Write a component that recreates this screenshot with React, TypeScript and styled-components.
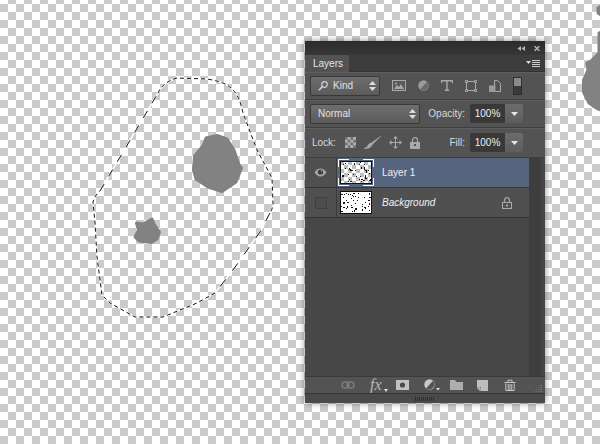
import React from "react";
import styled, { createGlobalStyle } from "styled-components";

const GlobalStyle = createGlobalStyle`
  html, body {
    margin: 0;
    padding: 0;
    background: #fff;
  }
`;

const Canvas = styled.div`
  position: relative;
  width: 600px;
  height: 444px;
  overflow: hidden;
  background-color: #fff;
  background-image: conic-gradient(#fff 25%, #cbcbcb 0 50%, #fff 0 75%, #cbcbcb 0);
  background-size: 16px 16px;
  background-position: 0 4px;
  font-family: "Liberation Sans", Arial, sans-serif;
  font-size: 10px;
  color: #dcdcdc;
`;

const Artwork = styled.svg`
  position: absolute;
  left: 0;
  top: 0;
`;

const Panel = styled.div`
  position: absolute;
  left: 305px;
  top: 41px;
  width: 240px;
  height: 362px;
  display: flex;
  flex-direction: column;
  background: #535353;
  box-shadow: 0 0 6px rgba(0, 0, 0, 0.45);
`;

const TitleBar = styled.div`
  height: 14px;
  flex: none;
  display: flex;
  align-items: center;
  justify-content: flex-end;
  gap: 9px;
  padding-right: 5px;
  background: linear-gradient(#2b2b2b, #383838);
`;

const TabRow = styled.div`
  height: 17px;
  flex: none;
  box-sizing: border-box;
  display: flex;
  align-items: center;
  justify-content: space-between;
  padding-right: 5px;
  background: #3d3d3d;
  border-bottom: 1px solid #333;
`;

const Tab = styled.div`
  width: 44px;
  height: 17px;
  align-self: flex-start;
  box-sizing: border-box;
  padding: 1px 0 0 8px;
  background: #535353;
  color: #e6e6e6;
  line-height: 15px;
`;

const OptionRow = styled.div<{ $height: number }>`
  height: ${(p) => p.$height}px;
  flex: none;
  box-sizing: border-box;
  display: flex;
  align-items: center;
  padding: 0 22px 0 5px;
  border-bottom: 1px solid #3e3e3e;
  box-shadow: inset 0 1px 0 #5f5f5f;
`;

const Select = styled.div<{ $width: number }>`
  width: ${(p) => p.$width}px;
  height: 20px;
  flex: none;
  box-sizing: border-box;
  display: flex;
  align-items: center;
  gap: 5px;
  padding: 0 3px 0 7px;
  border: 1px solid #393939;
  border-radius: 2px;
  background: linear-gradient(#6e6e6e, #5b5b5b);
  color: #e2e2e2;
`;

const SelectLabel = styled.span`
  flex: 1;
`;

const FilterIcons = styled.div`
  display: flex;
  align-items: center;
  gap: 12px;
  margin-left: 12px;
`;

const RowLabel = styled.span<{ $left?: number }>`
  margin-left: ${(p) => (p.$left === undefined ? "auto" : `${p.$left}px`)};
  color: #dadada;
`;

const NumberField = styled.div`
  width: 53px;
  height: 19px;
  margin-left: 5px;
  flex: none;
  display: flex;
  border-radius: 2px;
  overflow: hidden;
`;

const NumberValue = styled.div`
  width: 35px;
  text-align: center;
  line-height: 19px;
  background: #393939;
  color: #eee;
`;

const NumberArrow = styled.div`
  flex: 1;
  display: flex;
  align-items: center;
  justify-content: center;
  background: linear-gradient(#6c6c6c, #5d5d5d);
`;

const LockIcons = styled.div`
  display: flex;
  align-items: center;
  gap: 8px;
  margin-left: 9px;
`;

const ListArea = styled.div`
  flex: 1;
  display: flex;
  min-height: 0;
  background: #474747;
`;

const Layers = styled.div`
  flex: 1;
  display: flex;
  flex-direction: column;
`;

const Scrollbar = styled.div`
  width: 12px;
  flex: none;
  background: #3e3e3e;
  margin-right: 4px;
`;

const LayerRow = styled.div`
  height: 30px;
  box-sizing: border-box;
  display: grid;
  grid-template-columns: 32px 1fr;
  border-bottom: 1px solid #363636;
  background: #505050;
`;

const EyeCell = styled.div`
  display: flex;
  align-items: center;
  justify-content: center;
  border-right: 1px solid #3a3a3a;
`;

const EmptyBox = styled.div`
  width: 10px;
  height: 10px;
  border: 1px solid #3f3f3f;
  background: #4d4d4d;
`;

const LayerBody = styled.div<{ $selected?: boolean }>`
  display: flex;
  align-items: center;
  gap: 10px;
  padding: 0 17px 0 3px;
  background: ${(p) => (p.$selected ? "#56647d" : "transparent")};
`;

const Thumb = styled.div`
  width: 32px;
  height: 23px;
  flex: none;
  line-height: 0;
`;

const LayerName = styled.span<{ $italic?: boolean }>`
  flex: 1;
  color: #f0f0f0;
  font-style: ${(p) => (p.$italic ? "italic" : "normal")};
`;

const Footer = styled.div`
  height: 17px;
  flex: none;
  box-sizing: border-box;
  display: flex;
  align-items: center;
  padding: 0 3px 0 36px;
  background: #535353;
  border-top: 1px solid #3b3b3b;
`;

const FooterSlot = styled.div<{ $width: number }>`
  width: ${(p) => p.$width}px;
  flex: none;
  display: flex;
  align-items: flex-end;
  gap: 2px;
`;

const FxLabel = styled.span`
  font-family: "Liberation Serif", serif;
  font-style: italic;
  font-size: 16px;
  color: #b9b9b9;
  line-height: 14px;
`;

const ResizeDots = styled.div`
  margin-left: auto;
  align-self: flex-end;
  margin-bottom: 1px;
  line-height: 0;
`;

const ResizeStrip = styled.div`
  height: 10px;
  flex: none;
  box-sizing: border-box;
  display: flex;
  align-items: center;
  justify-content: center;
  border-top: 1px solid #343434;
  background: #4a4a4a;
`;

// Small repeatable PRNG so the thumbnails keep the same speckle on every load
function speckle(seed: number, count: number, width: number, height: number) {
  const dots: { x: number; y: number }[] = [];
  let s = seed;
  const next = () => {
    s = (s * 16807) % 2147483647;
    return s / 2147483647;
  };
  for (let i = 0; i < count; i++) {
    dots.push({ x: Math.floor(next() * width), y: Math.floor(next() * height) });
  }
  return dots;
}

const dim = "#a9a9a9";

const Glyph: React.FC<{ w: number; h: number; children: React.ReactNode }> = ({ w, h, children }) => (
  <svg width={w} height={h} viewBox={`0 0 ${w} ${h}`} style={{ flex: "none", display: "block" }}>
    {children}
  </svg>
);

const UpDown = () => (
  <Glyph w={7} h={10}>
    <path d="M3.5 0 7 4H0zM3.5 10 0 6h7z" fill="#ddd" />
  </Glyph>
);

const DownArrow = () => (
  <Glyph w={7} h={4}>
    <path d="M0 0h7L3.5 4z" fill="#e8e8e8" />
  </Glyph>
);

const SmallArrow = () => (
  <Glyph w={4} h={3}>
    <path d="M0 0h4L2 3z" fill="#ddd" />
  </Glyph>
);

const SearchIcon = () => (
  <Glyph w={10} h={10}>
    <circle cx="6.5" cy="3.5" r="2.8" fill="none" stroke="#d0d0d0" strokeWidth="1.2" />
    <path d="M4.4 5.6 0.8 9.2" stroke="#d0d0d0" strokeWidth="1.6" />
  </Glyph>
);

const PixelIcon = () => (
  <Glyph w={14} h={11}>
    <rect x="0.5" y="0.5" width="13" height="10" fill="#5a5a5a" stroke={dim} />
    <path d="M2 9 5 5l2 2 2-3 3 5z" fill={dim} />
    <circle cx="4" cy="3.4" r="1" fill={dim} />
  </Glyph>
);

const AdjustIcon = () => (
  <Glyph w={11} h={11}>
    <circle cx="5.5" cy="5.5" r="5.2" fill="#9c9c9c" />
    <path d="M9 1.8A5.2 5.2 0 0 1 2 9.4z" fill="#6a6a6a" />
  </Glyph>
);

const TypeIcon = () => (
  <Glyph w={12} h={11}>
    <path d="M0.5 3V0.7h11V3M6 0.7V10.3M3.8 10.3h4.4" fill="none" stroke={dim} strokeWidth="1.4" />
  </Glyph>
);

const ShapeIcon = () => (
  <Glyph w={12} h={12}>
    <rect x="1.5" y="1.5" width="9" height="9" fill="none" stroke={dim} />
    <path d="M0 0h3v3H0zM9 0h3v3H9zM0 9h3v3H0zM9 9h3v3H9z" fill="#555" />
    <path d="M0.5 0.5h2v2h-2zM9.5 0.5h2v2h-2zM0.5 9.5h2v2h-2zM9.5 9.5h2v2h-2z" fill="none" stroke={dim} />
  </Glyph>
);

const SmartIcon = () => (
  <Glyph w={12} h={12}>
    <path d="M5.5 0.5h3l3 3v8h-6z" fill="none" stroke={dim} />
    <rect x="0" y="5.5" width="6.5" height="6.5" fill="#9a9a9a" />
  </Glyph>
);

const FilterToggle = () => (
  <Glyph w={9} h={18}>
    <rect x="0.5" y="0.5" width="8" height="17" fill="#3a3a3a" stroke="#303030" />
    <rect x="1" y="1" width="7" height="8" fill="#8a8a8a" />
  </Glyph>
);

const CheckerLock = () => (
  <Glyph w={11} h={11}>
    <rect width="11" height="11" fill="#b0b0b0" />
    <path d="M0 0h2.7v2.7H0zM5.4 0h2.8v2.7H5.4zM2.7 2.7h2.7v2.7H2.7zM8.2 2.7H11v2.7H8.2zM0 5.4h2.7v2.8H0zM5.4 5.4h2.8v2.8H5.4zM2.7 8.2h2.7V11H2.7zM8.2 8.2H11V11H8.2z" fill="#737373" />
  </Glyph>
);

const BrushIcon = () => (
  <Glyph w={17} h={13}>
    <path
      d="M16.6 0.4 9 7.8c-.9 1-1.5 2.6-3 3.6-1.6 1-3.8 1.4-6 1 2-.6 3.2-1.4 3.7-2.7.6-1.5 1.8-2.5 3.6-2.8z"
      fill={dim}
      stroke={dim}
      strokeWidth="0.6"
    />
  </Glyph>
);

const MoveIcon = () => (
  <Glyph w={13} h={13}>
    <path d="M6.5 1v11M1 6.5h11" stroke={dim} />
    <path d="M6.5 0 9 2.6H4zM6.5 13 4 10.4h5zM0 6.5 2.6 4v5zM13 6.5 10.4 9V4z" fill={dim} />
  </Glyph>
);

const LockIcon: React.FC<{ hollow?: boolean }> = ({ hollow }) => (
  <Glyph w={10} h={12}>
    <path d="M2.5 5.5V3.2a2.5 2.5 0 0 1 5 0v2.3" fill="none" stroke={dim} strokeWidth="1.2" />
    {hollow ? (
      <>
        <rect x="0.5" y="5.5" width="9" height="6" fill="none" stroke={dim} />
        <rect x="4" y="7.5" width="2" height="2" fill={dim} />
      </>
    ) : (
      <path d="M0 5h10v7H0zM4 7v2h2V7z" fill={dim} fillRule="evenodd" />
    )}
  </Glyph>
);

const EyeIcon = () => (
  <Glyph w={13} h={9}>
    <path d="M0.5 4.5C2.5 1.5 4.5 0.6 6.5 0.6s4 .9 6 3.9c-2 3-4 3.9-6 3.9s-4-.9-6-3.9z" fill="#a8a8a8" />
    <circle cx="6.5" cy="4" r="2.6" fill="#3c3c3c" />
    <circle cx="7.4" cy="3" r="0.8" fill="#a8a8a8" />
  </Glyph>
);

const LinkIcon = () => (
  <Glyph w={14} h={8}>
    <rect x="1" y="1" width="7" height="6" rx="3" fill="none" stroke="#7c7c7c" strokeWidth="1.5" />
    <rect x="6" y="1" width="7" height="6" rx="3" fill="none" stroke="#7c7c7c" strokeWidth="1.5" />
  </Glyph>
);

const MaskIcon = () => (
  <Glyph w={13} h={10}>
    <rect width="13" height="10" fill="#c2c2c2" />
    <circle cx="6.5" cy="5" r="2.6" fill="#4b4b4b" />
  </Glyph>
);

const AdjustFooter = () => (
  <Glyph w={16} h={12}>
    <circle cx="5.5" cy="5.5" r="5.2" fill="#c8c8c8" />
    <path d="M9 1.8A5.2 5.2 0 0 1 2 9.4z" fill="#555" />
    <path d="M12 9h4l-2 2.4z" fill="#ddd" />
  </Glyph>
);

const FolderIcon = () => (
  <Glyph w={13} h={10}>
    <path d="M0 0h5l1.5 2H13v8H0z" fill="#aeaeae" />
  </Glyph>
);

const NewLayerIcon = () => (
  <Glyph w={11} h={11}>
    <path d="M0 0h11v11H4V7H0z" fill="#bdbdbd" />
    <path d="M0.5 8 3 10.5M0.5 7.8h2.6v2.7" stroke="#ddd" fill="none" />
  </Glyph>
);

const TrashIcon = () => (
  <Glyph w={12} h={12}>
    <path d="M0.5 3.5h11M4 3V1.2h4V3" fill="none" stroke="#c6c6c6" />
    <path d="M1.8 4.5v7h8.4v-7M4.2 5v6M6 5v6M7.8 5v6" fill="none" stroke="#c6c6c6" />
  </Glyph>
);

const DotsIcon = () => (
  <Glyph w={9} h={7}>
    <path d="M7 0h2v1H7zM5 2h1v1H5zM7 2h2v1H7zM3 4h1v1H3zM5 4h1v1H5zM7 4h2v1H7zM1 6h1v1H1zM3 6h1v1H3zM5 6h1v1H5zM7 6h2v1H7z" fill="#6e6e6e" />
  </Glyph>
);

const GripIcon = () => (
  <svg width="20" height="4" viewBox="0 0 20 4" style={{ display: "block" }}>
    {Array.from({ length: 10 }, (_, i) => (
      <rect key={i} x={i * 2} width="1" height="4" fill="#2e2e2e" />
    ))}
  </svg>
);

const CollapseIcon = () => (
  <Glyph w={8} h={5}>
    <path d="M4 0v5L0.5 2.5zM8 0v5L4.5 2.5z" fill="#b5b5b5" />
  </Glyph>
);

const CloseIcon = () => (
  <Glyph w={6} h={5}>
    <path d="M0.5 0 5.5 5M5.5 0 0.5 5" stroke="#b5b5b5" strokeWidth="1.4" />
  </Glyph>
);

const MenuIcon = () => (
  <Glyph w={14} h={7}>
    <path d="M0 1h5L2.5 4z" fill="#ddd" />
    <path d="M6 .5h8M6 2.5h8M6 4.5h8M6 6.5h8" stroke="#cfcfcf" />
  </Glyph>
);

const LayerThumb: React.FC<{ seed: number; transparent?: boolean }> = ({ seed, transparent }) => {
  const blacks = speckle(seed, transparent ? 40 : 48, 30, 20);
  return (
    <Thumb>
      <svg width="32" height="23" viewBox="0 0 32 23" style={{ overflow: "visible" }}>
        <defs>
          <pattern id="thumbCheck" width="8" height="8" patternUnits="userSpaceOnUse">
            <rect width="8" height="8" fill="#fff" />
            <rect width="4" height="4" fill="#bdbdbd" />
            <rect x="4" y="4" width="4" height="4" fill="#bdbdbd" />
          </pattern>
        </defs>
        <rect width="32" height="23" fill="#111" />
        <rect x="1" y="1" width="30" height="21" fill={transparent ? "url(#thumbCheck)" : "#fff"} />
        {blacks.map((d, i) => (
          <rect key={i} x={1 + d.x} y={1 + d.y} width={i % 6 === 0 ? 2 : 1} height={i % 7 === 0 ? 2 : 1} fill="#161616" />
        ))}
        {transparent && (
          <path d="M-1.5 6V-1.5H9M23-1.5H33.5V6M-1.5 17V24.5H9M23 24.5H33.5V17" fill="none" stroke="#fff" />
        )}
      </svg>
    </Thumb>
  );
};

const App = () => {
  return (
    <Canvas>
      <GlobalStyle />
      <Artwork width="600" height="444" viewBox="0 0 600 444">
        <defs>
          <filter id="soft">
            <feGaussianBlur stdDeviation="0.5" />
          </filter>
        </defs>
        <g fill="#828282" stroke="#828282" strokeWidth="3" strokeLinejoin="round" filter="url(#soft)">
          <path d="M206 138 217 135.500 227 139 234 150 239 165 241.500 168 236 182 222 191.500 208 187 196 179 193.500 170 194.500 156 203 146z" />
          <path d="M136.500 223 143 224 152 219 154 224 159.500 232 157 239 151.500 242.500 139 241 135 237 138.500 230z" />
          <path d="M601 32 599 33 599 53 591 61 587 63 588 70 583.500 80 583.500 92 589 103 597 108.500 601 110z" />
          <path d="M601 6 598 8 598 13 601 15z" />
        </g>
        <g fill="none" strokeWidth="1">
          <path
            d="M100 191 158 93Q163 82 177 78L207 79Q220 81 227 85 233 89 237 95 241 103 243 113L257 150 272 178 273 203Q273 208 270 213L260 232 233 270 215 293 197 303 163 317 135 317 110 303 102 295 97 257 95 223 93 202Q95 195 100 191Z"
            stroke="#fff"
            strokeWidth="1.5"
          />
          <path d="M100 191 158 93" stroke="#111" strokeDasharray="8 9" />
          <path
            d="M158 93Q163 82 177 78L207 79Q220 81 227 85 233 89 237 95 241 103 243 113L257 150 272 178 273 203Q273 208 270 213"
            stroke="#111"
            strokeDasharray="4 3"
          />
          <path d="M270 213 260 232 233 270 215 293" stroke="#111" strokeDasharray="9 11" />
          <path
            d="M215 293 197 303 163 317 135 317 110 303 102 295 97 257 95 223 93 202Q95 195 100 191"
            stroke="#111"
            strokeDasharray="4 3"
          />
        </g>
      </Artwork>

      <Panel>
        <TitleBar>
          <CollapseIcon />
          <CloseIcon />
        </TitleBar>
        <TabRow>
          <Tab>Layers</Tab>
          <MenuIcon />
        </TabRow>

        <OptionRow $height={28}>
          <Select $width={70}>
            <SearchIcon />
            <SelectLabel>Kind</SelectLabel>
            <UpDown />
          </Select>
          <FilterIcons>
            <PixelIcon />
            <AdjustIcon />
            <TypeIcon />
            <ShapeIcon />
            <SmartIcon />
            <FilterToggle />
          </FilterIcons>
        </OptionRow>

        <OptionRow $height={28}>
          <Select $width={110}>
            <SelectLabel>Normal</SelectLabel>
            <UpDown />
          </Select>
          <RowLabel>Opacity:</RowLabel>
          <NumberField>
            <NumberValue>100%</NumberValue>
            <NumberArrow>
              <DownArrow />
            </NumberArrow>
          </NumberField>
        </OptionRow>

        <OptionRow $height={30}>
          <RowLabel $left={2}>Lock:</RowLabel>
          <LockIcons>
            <CheckerLock />
            <BrushIcon />
            <MoveIcon />
            <LockIcon />
          </LockIcons>
          <RowLabel>Fill:</RowLabel>
          <NumberField>
            <NumberValue>100%</NumberValue>
            <NumberArrow>
              <DownArrow />
            </NumberArrow>
          </NumberField>
        </OptionRow>

        <ListArea>
          <Layers>
            <LayerRow>
              <EyeCell>
                <EyeIcon />
              </EyeCell>
              <LayerBody $selected>
                <LayerThumb seed={4711} transparent />
                <LayerName>Layer 1</LayerName>
              </LayerBody>
            </LayerRow>
            <LayerRow>
              <EyeCell>
                <EmptyBox />
              </EyeCell>
              <LayerBody>
                <LayerThumb seed={9127} />
                <LayerName $italic>Background</LayerName>
                <LockIcon hollow />
              </LayerBody>
            </LayerRow>
          </Layers>
          <Scrollbar />
        </ListArea>

        <Footer>
          <FooterSlot $width={29}>
            <LinkIcon />
          </FooterSlot>
          <FooterSlot $width={26}>
            <FxLabel>fx</FxLabel>
            <SmallArrow />
          </FooterSlot>
          <FooterSlot $width={28}>
            <MaskIcon />
          </FooterSlot>
          <FooterSlot $width={26}>
            <AdjustFooter />
          </FooterSlot>
          <FooterSlot $width={27}>
            <FolderIcon />
          </FooterSlot>
          <FooterSlot $width={27}>
            <NewLayerIcon />
          </FooterSlot>
          <TrashIcon />
          <ResizeDots>
            <DotsIcon />
          </ResizeDots>
        </Footer>
        <ResizeStrip>
          <GripIcon />
        </ResizeStrip>
      </Panel>
    </Canvas>
  );
};

export default App;
